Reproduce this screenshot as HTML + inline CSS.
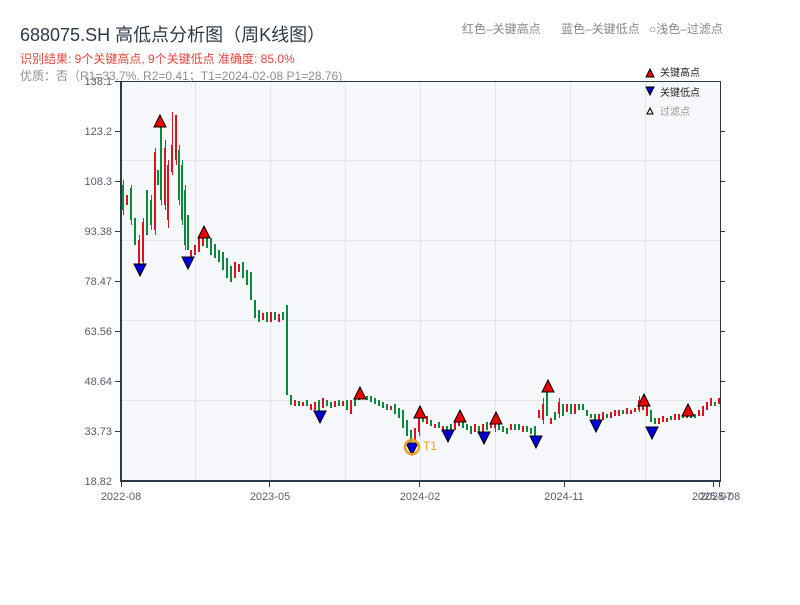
<!DOCTYPE html>
<html><head><meta charset="utf-8"><style>
body{margin:0;width:800px;height:600px;background:#fff;overflow:hidden;font-family:"Liberation Sans","Noto Sans CJK SC",sans-serif;}
svg text{font-family:"Liberation Sans","Noto Sans CJK SC",sans-serif;}
</style></head><body>
<svg width="800" height="600" xmlns="http://www.w3.org/2000/svg">
<rect x="121" y="81" width="599" height="400" fill="#f6f8fb"/>
<g stroke="#e2e5ea" stroke-width="1">
<line x1="195.5" y1="81" x2="195.5" y2="481"/><line x1="270.5" y1="81" x2="270.5" y2="481"/><line x1="345.5" y1="81" x2="345.5" y2="481"/><line x1="420.5" y1="81" x2="420.5" y2="481"/><line x1="495.5" y1="81" x2="495.5" y2="481"/><line x1="570.5" y1="81" x2="570.5" y2="481"/><line x1="645.5" y1="81" x2="645.5" y2="481"/>
<line x1="121" y1="160.5" x2="720" y2="160.5"/><line x1="121" y1="240.5" x2="720" y2="240.5"/><line x1="121" y1="320.5" x2="720" y2="320.5"/><line x1="121" y1="400.5" x2="720" y2="400.5"/>
</g>
<path fill="none" stroke="#0a8a3a" stroke-width="1" d="M123.5 180V215M131.5 185V225M151.5 195V230M161.5 118V205M179.5 145V205M182.5 160V225M185.5 185V250"/>
<path fill="none" stroke="#d8151b" stroke-width="1" d="M139.5 235V268M143.5 218V265M155.5 148V235M165.5 140V210M168.5 160V228M172.5 112V175M176.5 118V165M419.5 408V436M495.5 414V432M543.5 398V424M559.5 398V418M639.5 396V412"/>
<path fill="none" stroke="#0a8a3a" stroke-width="2" d="M123 185V210M131 188V220M135 218V245M147 190V235M151 200V225M158 170V185M161 125V200M179 150V200M182 165V220M185 190V245M188 215V250M207 236V248M211 238V255M215 244V258M219 250V262M223 252V270M227 258V278M231 266V282M243 262V278M247 270V285M251 272V300M255 300V318M259 310V322M267 312V322M275 312V320M283 312V320M287 305V395M291 395V405M299 401V406M307 400V406M319 400V412M327 400V406M331 402V408M339 400V406M347 400V410M355 398V406M367 396V400M371 396V402M375 398V404M379 400V406M383 402V408M387 404V410M395 404V414M399 408V418M403 410V428M407 420V436M411 430V442M423 416V422M431 420V426M439 422V428M447 426V434M451 424V432M463 422V428M467 424V430M471 426V434M479 426V432M487 422V430M499 420V430M503 426V432M507 428V434M515 424V430M519 424V430M527 426V432M531 428V434M535 426V436M547 390V416M555 412V420M563 404V416M571 404V414M579 404V410M583 404V410M587 410V416M591 414V418M595 414V422M607 414V418M623 410V414M651 410V422M655 418V424M671 416V420M683 414V418M691 412V418M695 414V418M715 402V406"/>
<path fill="none" stroke="#d8151b" stroke-width="2" d="M127 195V205M139 240V265M143 222V262M155 152V230M165 148V205M168 165V220M172 145V172M176 115V160M191 250V262M195 245V255M199 238V252M203 232V246M235 262V278M239 264V272M263 313V320M271 312V322M279 314V322M295 400V406M303 402V406M311 404V410M315 402V410M323 398V408M335 401V407M343 401V406M351 400V414M359 394V400M363 394V398M391 406V410M415 428V440M419 412V432M427 416V424M435 424V428M443 426V432M455 420V430M459 416V426M475 424V432M483 424V434M491 424V428M495 418V428M511 424V430M523 426V432M539 410V418M543 404V420M551 418V424M559 402V414M567 404V412M575 404V414M599 414V420M603 412V420M611 412V418M615 410V416M619 410V416M627 408V414M631 410V414M635 408V412M639 400V410M643 402V410M647 402V416M659 418V424M663 416V422M667 418V422M675 414V420M679 414V420M687 410V418M699 410V416M703 406V416M707 402V410M711 398V406M719 398V404"/>
<g stroke="#2b3a4a" fill="none">
<line x1="121" y1="81" x2="121" y2="481" stroke-width="2"/>
<line x1="120" y1="481" x2="721" y2="481" stroke-width="2"/>
<line x1="121" y1="81.5" x2="720" y2="81.5" stroke-width="1"/>
<line x1="720.5" y1="81" x2="720.5" y2="481" stroke-width="1"/>
<g stroke-width="1">
<line x1="115" y1="81.5" x2="121" y2="81.5"/><line x1="115" y1="131.5" x2="121" y2="131.5"/><line x1="115" y1="181.5" x2="121" y2="181.5"/><line x1="115" y1="231.5" x2="121" y2="231.5"/><line x1="115" y1="281.5" x2="121" y2="281.5"/><line x1="115" y1="331.5" x2="121" y2="331.5"/><line x1="115" y1="381.5" x2="121" y2="381.5"/><line x1="115" y1="431.5" x2="121" y2="431.5"/>
<line x1="720" y1="131.5" x2="725" y2="131.5"/><line x1="720" y1="181.5" x2="725" y2="181.5"/><line x1="720" y1="231.5" x2="725" y2="231.5"/><line x1="720" y1="281.5" x2="725" y2="281.5"/><line x1="720" y1="331.5" x2="725" y2="331.5"/><line x1="720" y1="381.5" x2="725" y2="381.5"/><line x1="720" y1="431.5" x2="725" y2="431.5"/>
<line x1="121.5" y1="481" x2="121.5" y2="487"/><line x1="269.5" y1="481" x2="269.5" y2="487"/><line x1="419.5" y1="481" x2="419.5" y2="487"/><line x1="564.5" y1="481" x2="564.5" y2="487"/><line x1="713.5" y1="481" x2="713.5" y2="487"/><line x1="719.5" y1="481" x2="719.5" y2="487"/>
</g></g>
<g fill="#555e6b" font-size="11" text-anchor="end">
<text x="112" y="85">138.1</text><text x="112" y="135">123.2</text><text x="112" y="185">108.3</text><text x="112" y="235">93.38</text><text x="112" y="285">78.47</text><text x="112" y="335">63.56</text><text x="112" y="385">48.64</text><text x="112" y="435">33.73</text><text x="112" y="485">18.82</text>
</g>
<g fill="#555e6b" font-size="11" text-anchor="middle">
<text x="121" y="500">2022-08</text><text x="270" y="500">2023-05</text><text x="420" y="500">2024-02</text><text x="564" y="500">2024-11</text><text x="712" y="500">2025-07</text><text x="720" y="500">2025-08</text>
</g>
<g stroke="#000" stroke-width="1" fill="#e00">
<polygon points="154,127 166,127 160,115"/><polygon points="198,238 210,238 204,226"/><polygon points="354,399 366,399 360,387"/><polygon points="414,418 426,418 420,406"/><polygon points="454,422 466,422 460,410"/><polygon points="490,424 502,424 496,412"/><polygon points="542,392 554,392 548,380"/><polygon points="638,406 650,406 644,394"/><polygon points="682,416 694,416 688,404"/>
</g>
<g stroke="#000" stroke-width="1" fill="#00d">
<polygon points="134,264 146,264 140,276"/><polygon points="182,257 194,257 188,269"/><polygon points="314,411 326,411 320,423"/><polygon points="406,443 418,443 412,455"/><polygon points="442,430 454,430 448,442"/><polygon points="478,432 490,432 484,444"/><polygon points="530,436 542,436 536,448"/><polygon points="590,420 602,420 596,432"/><polygon points="646,427 658,427 652,439"/>
</g>
<circle cx="412" cy="447" r="7" fill="none" stroke="#f0a020" stroke-width="2.5"/>
<text x="423" y="450" fill="#f0a020" font-size="12">T1</text>
<text x="20" y="41" fill="#2e3a48" font-size="18">688075.SH 高低点分析图（周K线图）</text>
<text x="20" y="63" fill="#e8453c" font-size="12">识别结果: 9个关键高点, 9个关键低点  准确度: 85.0%</text>
<text x="20" y="80" fill="#8a8f96" font-size="12">优质：否（R1=33.7%, R2=0.41；T1=2024-02-08 P1=28.76)</text>
<g fill="#888" font-size="12">
<text x="462" y="33">红色–关键高点</text><text x="561" y="33">蓝色–关键低点</text><text x="649" y="33">○浅色–过滤点</text>
</g>
<polygon points="646,77 654,77 650,69" fill="#e00" stroke="#000"/>
<text x="660" y="76" font-size="10" fill="#222">关键高点</text>
<polygon points="646,87 654,87 650,95" fill="#00c" stroke="#000"/>
<text x="660" y="96" font-size="10" fill="#222">关键低点</text>
<polygon points="647,114 653,114 650,108" fill="#fdd" stroke="#000"/>
<text x="660" y="115" font-size="10" fill="#999">过滤点</text>
</svg>
</body></html>
